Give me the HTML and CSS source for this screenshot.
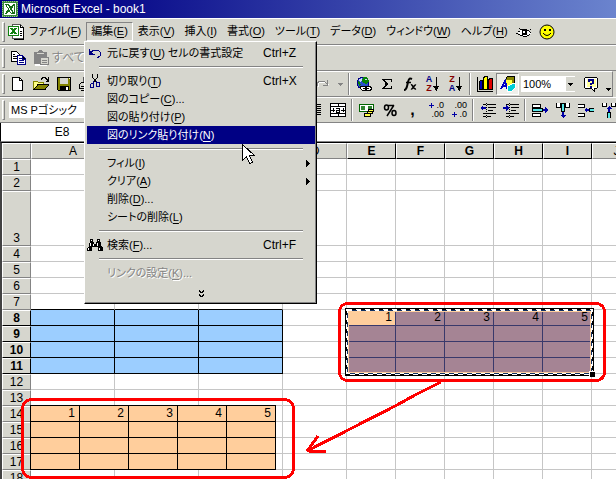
FILE: index.html
```html
<!DOCTYPE html>
<html lang="ja">
<head>
<meta charset="utf-8">
<title>Microsoft Excel - book1</title>
<link rel="stylesheet" href="styles.css">
</head>
<body>
<header class="titlebar">
  <svg class="icon" viewBox="0 0 16 16"><path fill="#3a8a3a" d="M0 0h16v16H0z"/><path fill="none" stroke="#8fc08f" stroke-dasharray="1 1" d="M0 .5h16M0 15.500h16M.5 0v16M15.500 0v16"/><path fill="#fff" d="M2 2h12v12H2z"/><path fill="#187018" d="M3 3h4l2 3 2-3h2l-3 5 3 5H9l-2-3-2 3H3l3-5z"/><path stroke="#fff" d="M5 4l5 8"/><path stroke="#187018" d="M12.500 3v10"/></svg>
  <h1>Microsoft Excel - book1</h1>
</header>

<nav class="menubar">
  <span class="grip"></span>
  <svg class="icon" viewBox="0 0 16 16"><path fill="#fff" stroke="#555" d="M4.500.5h8l3 3v11h-11z"/><path stroke="#000" fill="none" d="M12.500.5v3h3v12h-10M12 7.500h2m-2 2h2m-2 2h2"/><path fill="#fff" stroke="#108010" d="M.5 2.500h10v9H.5z"/><path stroke="#108010" stroke-width="2" d="M3 4l5 6M8 4l-5 6"/></svg>
  <button class="menu-title">ファイル(<u>F</u>)</button>
  <button class="menu-title open">編集(<u>E</u>)</button>
  <button class="menu-title">表示(<u>V</u>)</button>
  <button class="menu-title">挿入(<u>I</u>)</button>
  <button class="menu-title">書式(<u>O</u>)</button>
  <button class="menu-title">ツール(<u>T</u>)</button>
  <button class="menu-title">データ(<u>D</u>)</button>
  <button class="menu-title">ウィンドウ(<u>W</u>)</button>
  <button class="menu-title">ヘルプ(<u>H</u>)</button>
  <button class="tool" aria-label="表示"><svg class="icon" viewBox="0 0 16 16"><path fill="#fff" d="M4 6h9l2 3-3 3H5L2 9z"/><path fill="none" stroke="#000" d="M0 9.500h2M2 7.500h2M4 5.500h7M11 6.500h2M13 7.500h1M14 8.500h1M2 10.500h2M4 11.500h3M7 12.500h4M11 11.500h2M13 10.500h1M3 4.500h1M14 5.500h1"/><path d="M6 6h5v5H6z"/><path fill="#fff" d="M7 7h2v2H7z"/></svg></button>
  <button class="tool" aria-label="スマイル"><svg class="icon smooth" viewBox="0 0 16 16"><circle cx="8" cy="8" r="7" fill="#ff0" stroke="#000"/><path d="M5 5h2v2H5zM10 5h2v2h-2z"/><path fill="none" stroke="#000" d="M4 9q4 5 8 0"/></svg></button>
</nav>

<section class="toolbar">
  <span class="grip"></span>
  <button class="tool" aria-label="コピー"><svg class="icon" viewBox="0 0 16 16"><path fill="#fff" stroke="#000" d="M1.500 1.500h5l3 3v7h-8z"/><path stroke="#000" d="M3 4.500h2M3 6.500h4M3 8.500h4"/><path fill="#fff" stroke="#000084" d="M7.500 5.500h5l3 3v6h-8z"/><path stroke="#000084" d="M9 8.500h3M9 10.500h5M9 12.500h5M12.500 6v3h3"/></svg></button>
  <button class="tool" aria-label="貼り付け"><svg class="icon" viewBox="0 0 16 16"><path fill="#fff" d="M2 3h12v13H2z"/><path fill="#848484" d="M1 2h4l1-2h3l1 2h4v12H1z"/><path stroke="#d6d6ce" d="M4 3.500h7"/><path fill="#d6d6ce" stroke="#848484" d="M7.500 7.500h8v7h-8z"/><path stroke="#848484" d="M9 10.500h5M9 12.500h5"/></svg></button>
  <button class="text-tool" disabled>すべて貼り付け</button>
</section>

<section class="toolbar standard">
  <div class="tools start standard-start">
    <span class="grip"></span>
    <button class="tool" aria-label="新規作成"><svg class="icon" viewBox="0 0 16 16"><path fill="#fff" stroke="#000" d="M2.500 1.500h7l3 3v10h-10z"/><path fill="none" stroke="#000" d="M9.500 1.500v3h3"/></svg></button>
    <button class="tool" aria-label="開く"><svg class="icon" viewBox="0 0 16 16"><path fill="#ffff84" stroke="#848400" d="M.5 13.500v-8h4l1 1h5v7z"/><path fill="#848400" stroke="#000" d="M1 13.500l4-5h11l-4 5z"/><path fill="none" stroke="#000" d="M8 3.500l2-2h2l3 3M15.500 1v4h-3"/></svg></button>
    <button class="tool" aria-label="保存"><svg class="icon" viewBox="0 0 16 16"><path fill="#848400" stroke="#000" d="M1.500 1.500h13v13h-12l-1-1z"/><path fill="#d6d6ce" d="M4 2h8v6H4z"/><path d="M4 10h9v5H4z"/><path fill="#fff" d="M10 11h2v3h-2zM13 2h1v1h-1z"/></svg></button>
    <button class="tool" aria-label="印刷"><svg class="icon" viewBox="0 0 16 16"><path fill="#fff" stroke="#555" d="M4.500 7.500v-6h8v6"/><path fill="#d6d6ce" stroke="#000" d="M.5 12.500v-4l2-2h12v6z"/><path stroke="#000" d="M2 10.500h10M2 14.500h12"/></svg></button>
  </div>
  <div class="tools">
    <button class="tool" aria-label="やり直し" disabled><svg class="icon" viewBox="0 0 16 16"><path fill="none" stroke="#fff" d="M3 11V8l2-2h5l4 3"/><path fill="none" stroke="#848484" d="M2.500 10V7l2-2h4l4 3M12.500 4v5h-5"/></svg></button>
    <button class="drop" aria-label="やり直しの一覧" disabled><svg viewBox="0 0 7 4"><path fill="#848484" d="M0 0h7L3.500 4z"/></svg></button>
    <span class="sep"></span>
    <button class="tool" aria-label="ハイパーリンク"><svg class="icon" viewBox="0 0 16 16"><circle cx="7" cy="7" r="6" fill="#2850c8" stroke="#000084"/><path fill="#088408" d="M7 1h4l2 4-3 4-2-2-2-1zM2 5l2 1 1 3-2 1z"/><path fill="#c6d6ff" d="M3 3l3-1v2L4 6zM9 3h2v1H9z"/><path fill="#fff" stroke="#000" d="M4.500 10.500h6v4h-4l-2-2zM9.500 10.500h5l1 2-1 2h-5z"/><path stroke="#000" d="M7 12.500h6"/></svg></button>
    <button class="tool" aria-label="オート SUM"><svg class="icon" viewBox="0 0 16 16"><path fill="none" stroke="#000" d="M12.500 6V3.500h-9M3 12.500h9.500V10"/><path fill="none" stroke="#000" stroke-width="2" d="M4 3l4 5-4 5"/></svg></button>
    <button class="tool" aria-label="関数貼り付け"><svg class="icon smooth" viewBox="0 0 16 16"><path fill="none" stroke="#000" stroke-width="2" d="M2 14c3 0 3-4 4-8s2-4 4-3"/><path fill="none" stroke="#000" stroke-width="1.500" d="M4 6.500h5M9 9c2-1 2 5 5 4M14 9c-2-1-3 5-5 4"/></svg></button>
    <button class="tool sort" aria-label="昇順で並べ替え"><span class="letters"><b class="navy">A</b><b class="maroon">Z</b></span><svg viewBox="0 0 6 16"><path stroke="#000" d="M3.500 1v13"/><path d="M0 10h6l-2.500 5z"/></svg></button>
    <button class="tool sort" aria-label="降順で並べ替え"><span class="letters"><b class="maroon">Z</b><b class="navy">A</b></span><svg viewBox="0 0 6 16"><path stroke="#000" d="M3.500 1v13"/><path d="M0 10h6l-2.500 5z"/></svg></button>
    <span class="sep"></span>
    <button class="tool" aria-label="グラフ ウィザード"><svg class="icon" viewBox="0 0 16 16"><path stroke="#000" fill="none" d="M.5 1v14.500H16"/><path fill="#0000b5" stroke="#000" d="M2.500 5.500l1-1h2v9h-3z"/><path fill="#ff0" stroke="#000" d="M6.500 2.500l1-2h3v13h-4z"/><path fill="#e00000" stroke="#000" d="M11.500 4.500l1-2h3v11h-4z"/></svg></button>
    <button class="tool pressed" aria-label="図形描画" aria-pressed="true"><svg class="icon" viewBox="0 0 16 16"><path fill="#848400" stroke="#000" d="M5.500 3.500l2-3h7v7l-2 3h-7z"/><path fill="#ffff42" d="M6 4h6v6H6z"/><path fill="none" stroke="#0000c6" stroke-width="2" d="M1 13l4-8 2 8M2 10h5"/><path fill="#00ced6" stroke="#fff" d="M7.500 10.500l5-3h3v4l-4 4h-4z"/></svg></button>
    <select class="combo zoom" aria-label="ズーム"><option>100%</option></select>
    <button class="tool help" aria-label="ヘルプ"><svg class="icon" viewBox="0 0 16 16"><path fill="#fff" stroke="#000" d="M2.500 1.500h11l1 1v9l-1 1h-2v3l-3-3h-6l-1-1v-9z"/><path fill="#ffff9c" d="M4 3h9v8H4z"/><path fill="none" stroke="#000084" stroke-width="2" d="M6 6V4h4v3L8 8v1M8 10v2"/></svg></button>
    <button class="drop low" aria-label="その他のボタン"><svg viewBox="0 0 7 4"><path d="M0 0h7L3.500 4z"/></svg></button>
  </div>
</section>

<section class="toolbar">
  <div class="tools start format-start">
    <span class="grip"></span>
    <select class="combo font" aria-label="フォント"><option>MS Pゴシック</option></select>
  </div>
  <div class="tools">
    <button class="tool" aria-label="右揃え"><svg class="icon" viewBox="0 0 16 16"><path stroke="#000" d="M1 2.500h13M5 4.500h9M1 6.500h13M5 8.500h9M1 10.500h13M5 12.500h9"/></svg></button>
    <button class="tool" aria-label="セルを結合して中央揃え"><svg class="icon" viewBox="0 0 16 16"><path fill="#fff" stroke="#000" d="M.5 1.500h15v13H.5zM.5 4.500h15v7H.5M8.500 1v3M8.500 12v3"/><path stroke="#000" fill="none" d="M1 8h4M3 6v4M11 8h4M13 6v4M6 6.500h3.500V10H6.500V8.500h3"/></svg></button>
    <span class="sep"></span>
    <button class="tool" aria-label="通貨スタイル"><svg class="icon" viewBox="0 0 16 16"><path fill="#fff" stroke="#006300" d="M.5 2.500h14v7H.5z"/><path fill="#318431" d="M2 4h11v4H2z"/><path fill="#fff" d="M6 4h3v4H6z"/><path fill="#ffff42" stroke="#000" d="M9.500 7.500h5v2h-5zM8.500 9.500h5v2h-5zM5.500 11.500h6v3h-6z"/></svg></button>
    <button class="tool" aria-label="パーセント スタイル"><svg class="icon smooth" viewBox="0 0 16 16"><path fill="none" stroke="#000" stroke-width="1.500" d="M12 3L5 14M2.500 5.500a2 2.500 0 1 0 4 0a2 2.500 0 1 0-4 0M10 11a2 2.500 0 1 0 4 0a2 2.500 0 1 0-4 0M5 3.500h7"/></svg></button>
    <button class="tool glyph" aria-label="桁区切りスタイル">,</button>
    <button class="tool decimals" aria-label="小数点表示桁上げ"><span><svg viewBox="0 0 5 5"><path fill="#0000a5" d="M0 2h2V0h1v2h2v1H3v2H2V3H0z"/></svg>.0</span><span>.00</span></button>
    <button class="tool decimals" aria-label="小数点表示桁下げ"><span>.00</span><span><svg viewBox="0 0 5 5"><path fill="#0000a5" d="M0 2h2V0h1v2h2v1H3v2H2V3H0z"/></svg>.0</span></button>
    <span class="sep"></span>
    <button class="tool" aria-label="インデント解除"><svg class="icon" viewBox="0 0 16 16"><path stroke="#000" d="M3 2.500h3M7 2.500h9M8 5.500h8M8 8.500h5M3 11.500h3M7 11.500h9M3 14.500h3M7 14.500h4"/><path stroke="#000" stroke-dasharray="1 1" d="M6.500 1v15"/><path fill="#0000a5" d="M0 6l3-3v2h3v2H3v2z"/></svg></button>
    <button class="tool" aria-label="インデント"><svg class="icon" viewBox="0 0 16 16"><path stroke="#000" d="M3 2.500h3M7 2.500h9M8 5.500h8M8 8.500h5M3 11.500h3M7 11.500h9M3 14.500h3M7 14.500h4"/><path stroke="#000" stroke-dasharray="1 1" d="M6.500 1v15"/><path fill="#0000a5" d="M6 6L3 3v2H0v2h3v2z"/></svg></button>
    <span class="sep"></span>
    <button class="tool" aria-label="セルの挿入 右"><svg class="icon" viewBox="0 0 16 16"><path fill="#fff" stroke="#000" d="M.5 2.500h8v3h-8zM.5 11.500h8v3h-8z"/><path fill="#5ae7e7" stroke="#000" d="M.5 6.500h10v3H.5z"/><path fill="#0000a5" d="M11 7h2V5l3 3-3 3V9h-2z"/></svg></button>
    <button class="tool" aria-label="セルの挿入 下"><svg class="icon" viewBox="0 0 16 16"><path fill="#fff" stroke="#000" d="M1.500 1v4.500h4V1M10.500 1v4.500h4V1"/><path fill="#5ae7e7" stroke="#000" d="M6.500 1.500h3v8h-3z"/><path fill="#0000a5" d="M7 10h2v3h2l-3 3-3-3h2z"/></svg></button>
    <button class="tool" aria-label="セルの削除 左"><svg class="icon" viewBox="0 0 16 16"><path fill="#fff" stroke="#000" d="M0 2.500h6.500v3H0M0 11.500h6.500v3H0"/><path fill="#5ae7e7" stroke="#000" d="M16 6.500h-5v3h5"/><path fill="#0000a5" d="M11 7H9V5L6 8l3 3V9h2z"/></svg></button>
    <button class="tool" aria-label="セルの削除 上"><svg class="icon" viewBox="0 0 16 16"><path fill="#fff" stroke="#000" d="M1.500 1v3.500h4V1M10.500 1v3.500h4V1"/><path fill="#5ae7e7" stroke="#000" d="M6.500 15.500v-5h3v5"/><path fill="#0000a5" d="M7 10V7H5l3-3 3 3H9v3z"/></svg></button>
  </div>
</section>

<div class="formula-bar"><input class="name-box" aria-label="名前ボックス" value="E8"><input class="formula" aria-label="数式バー"></div>

<main class="sheet">
  <table class="grid">
    <colgroup><col class="c-head"><col class="c-wide"><col class="c-wide"><col class="c-wide"><col class="c-mid"><col class="c-slim"><col class="c-slim"><col class="c-slim"><col class="c-slim"><col class="c-slim"><col></colgroup>
    <thead><tr><th></th><th>A</th><th>B</th><th>C</th><th>D</th><th class="on">E</th><th class="on">F</th><th class="on">G</th><th class="on">H</th><th class="on">I</th><th>J</th></tr></thead>
    <tbody>
      <tr><th>1</th><td></td><td></td><td></td><td></td><td></td><td></td><td></td><td></td><td></td><td></td></tr>
      <tr><th>2</th><td></td><td></td><td></td><td></td><td></td><td></td><td></td><td></td><td></td><td></td></tr>
      <tr class="tall"><th>3</th><td></td><td></td><td></td><td></td><td></td><td></td><td></td><td></td><td></td><td></td></tr>
      <tr><th>4</th><td></td><td></td><td></td><td></td><td></td><td></td><td></td><td></td><td></td><td></td></tr>
      <tr><th>5</th><td></td><td></td><td></td><td></td><td></td><td></td><td></td><td></td><td></td><td></td></tr>
      <tr><th>6</th><td></td><td></td><td></td><td></td><td></td><td></td><td></td><td></td><td></td><td></td></tr>
      <tr class="edge"><th>7</th><td></td><td></td><td></td><td></td><td></td><td></td><td></td><td></td><td></td><td></td></tr>
      <tr><th class="on">8</th><td class="blue"></td><td class="blue"></td><td class="blue"></td><td></td><td class="sel active">1</td><td class="sel">2</td><td class="sel">3</td><td class="sel">4</td><td class="sel">5</td><td></td></tr>
      <tr><th class="on">9</th><td class="blue"></td><td class="blue"></td><td class="blue"></td><td></td><td class="sel"></td><td class="sel"></td><td class="sel"></td><td class="sel"></td><td class="sel"></td><td></td></tr>
      <tr><th class="on">10</th><td class="blue"></td><td class="blue"></td><td class="blue"></td><td></td><td class="sel"></td><td class="sel"></td><td class="sel"></td><td class="sel"></td><td class="sel"></td><td></td></tr>
      <tr><th class="on">11</th><td class="blue"></td><td class="blue"></td><td class="blue"></td><td></td><td class="sel"></td><td class="sel"></td><td class="sel"></td><td class="sel"></td><td class="sel"></td><td></td></tr>
      <tr><th>12</th><td></td><td></td><td></td><td></td><td></td><td></td><td></td><td></td><td></td><td></td></tr>
      <tr><th>13</th><td></td><td></td><td></td><td></td><td></td><td></td><td></td><td></td><td></td><td></td></tr>
      <tr><th>14</th><td></td><td></td><td></td><td></td><td></td><td></td><td></td><td></td><td></td><td></td></tr>
      <tr><th>15</th><td></td><td></td><td></td><td></td><td></td><td></td><td></td><td></td><td></td><td></td></tr>
      <tr><th>16</th><td></td><td></td><td></td><td></td><td></td><td></td><td></td><td></td><td></td><td></td></tr>
      <tr><th>17</th><td></td><td></td><td></td><td></td><td></td><td></td><td></td><td></td><td></td><td></td></tr>
      <tr><th>18</th><td></td><td></td><td></td><td></td><td></td><td></td><td></td><td></td><td></td><td></td></tr>
    </tbody>
  </table>

  <table class="linked-picture">
    <tr><td>1</td><td>2</td><td>3</td><td>4</td><td>5</td></tr>
    <tr><td></td><td></td><td></td><td></td><td></td></tr>
    <tr><td></td><td></td><td></td><td></td><td></td></tr>
    <tr><td></td><td></td><td></td><td></td><td></td></tr>
  </table>

  <svg class="marquee" viewBox="0 0 250 69">
    <path fill="none" stroke="#000" stroke-width="2" d="M1 1h247v66H1z"/>
    <path fill="none" stroke="#ffce9c" stroke-width="2" d="M3 3h243v62H3z"/>
    <path fill="none" stroke="#fff" d="M2.500 2.500h244v63h-244z"/>
    <path fill="none" stroke="#fff" d="M1.500 1.500h246v65h-246z" stroke-dasharray="5 4"/>
    <path fill="none" stroke="#103163" d="M2.500 2.500h244v63h-244z" stroke-dasharray="5 4" stroke-dashoffset="5"/>
    <path fill="#fff" d="M244 63h5v5h-5z"/><path d="M245 64h5v5h-5z"/>
  </svg>

  <svg class="annotation" viewBox="0 0 616 337">
    <rect x="339.500" y="161.500" width="265" height="77" rx="8"/>
    <rect x="22.500" y="257.500" width="271" height="78" rx="9"/>
    <path d="M441 240l-26 13-18 10-88 45M318 294l-10 14 1 1 17 1"/>
  </svg>
</main>

<div class="menu" role="menu">
  <button role="menuitem"><svg class="icon" viewBox="0 0 16 16"><path fill="none" stroke="#000084" d="M2.500 4v5h5M3 8l4-3h4l2 2v4l-3 2"/><path fill="#000084" d="M2 5l5 5H2z"/></svg><span>元に戻す(<u>U</u>) セルの書式設定</span><kbd>Ctrl+Z</kbd></button>
  <hr>
  <button role="menuitem"><svg class="icon" viewBox="0 0 16 16"><path fill="none" stroke="#000" d="M5.500 1v3l4 6M10.500 1v3l-4 6"/><path fill="none" stroke="#000084" d="M6.500 8v3M9.500 8v3M4.500 10.500h2v4h-3v-3zM9.500 9.500h3v4h-3z"/></svg><span>切り取り(<u>T</u>)</span><kbd>Ctrl+X</kbd></button>
  <button role="menuitem"><i></i><span>図のコピー(<u>C</u>)...</span></button>
  <button role="menuitem"><i></i><span>図の貼り付け(<u>P</u>)</span></button>
  <button role="menuitem" class="hot"><i></i><span>図のリンク貼り付け(<u>N</u>)</span></button>
  <hr>
  <button role="menuitem"><i></i><span>フィル(<u>I</u>)</span><svg class="more" viewBox="0 0 4 7"><path d="M0 0l4 3.500L0 7z"/></svg></button>
  <button role="menuitem"><i></i><span>クリア(<u>A</u>)</span><svg class="more" viewBox="0 0 4 7"><path d="M0 0l4 3.500L0 7z"/></svg></button>
  <button role="menuitem"><i></i><span>削除(<u>D</u>)...</span></button>
  <button role="menuitem"><i></i><span>シートの削除(<u>L</u>)</span></button>
  <hr>
  <button role="menuitem"><svg class="icon" viewBox="0 0 16 16"><path d="M3 2h3v3h1v2h2V5h1V2h3v3l1 1v3l2 2v3h-5v-4H5v4H0v-3l2-2V6l1-1z"/><path fill="#fff" d="M4 3h1v1H4zM11 3h1v1h-1zM3 6h1v3H3zM6 7h1v2H6zM10 6h1v3h-1zM1 11h1v2H1zM12 11h1v2h-1z"/></svg><span>検索(<u>F</u>)...</span><kbd>Ctrl+F</kbd></button>
  <hr>
  <button role="menuitem" disabled><i></i><span>リンクの設定(<u>K</u>)...</span></button>
  <button class="expand" aria-label="すべて表示"><svg viewBox="0 0 5 8"><path fill="none" stroke="#000" stroke-width="1.500" d="M0 .5l2.500 2L5 .5M0 4.500l2.500 2 2.500-2"/></svg></button>
</div>

<svg class="cursor" viewBox="0 0 13 21"><path fill="#fff" stroke="#000" d="M.5.5v16l4-4 3 7 3-1-3-7h5z"/></svg>
</body>
</html>
```
FILE: styles.css
```css
:root {
  --face: #d6d6ce;
  --shade: #848484;
  --navy: #000084;
  --line: #c6c6c6;
  --orange: #ffce9c;
}

* { box-sizing: border-box; }

body {
  position: relative;
  margin: 0;
  height: 100vh;
  overflow: hidden;
  background: var(--face);
  color: #000;
  font: 12px/16px "Liberation Sans", "Noto Sans CJK JP", sans-serif;
  font-feature-settings: "palt";
}

button, input, select {
  margin: 0;
  padding: 0;
  border: 0;
  border-radius: 0;
  background: none;
  color: inherit;
  font: inherit;
  font-feature-settings: inherit;
}

svg { display: block; flex: none; shape-rendering: crispEdges; }
.smooth { shape-rendering: auto; }
.icon { width: 16px; height: 16px; }
u { text-underline-offset: 2px; }

.titlebar {
  display: flex;
  align-items: center;
  gap: 3px;
  height: 18px;
  padding-left: 2px;
  background: linear-gradient(90deg, #000084 12%, #6b84ce);
  color: #fff;
}
.titlebar h1 { margin: 0; font-size: 12px; font-weight: 400; }

.menubar, .toolbar {
  display: flex;
  align-items: center;
  border-top: 1px solid #fff;
  border-bottom: 1px solid var(--shade);
  white-space: nowrap;
}
.menubar { height: 27px; padding-left: 2px; }
.toolbar { height: 26px; padding-left: 2px; }
.standard { margin-right: 3px; border-right: 1px solid var(--shade); }

.grip {
  flex: none;
  width: 3px;
  height: 20px;
  margin-right: 1px;
  border: 1px solid;
  border-color: #fff var(--shade) var(--shade) #fff;
}
.menubar .grip { margin-right: 3px; }

.menu-title {
  height: 19px;
  padding: 0 4px;
  border: 1px solid transparent;
  font-size: 11px;
  line-height: 17px;
}
.menu-title.open { border-color: var(--shade) #fff #fff var(--shade); }

.tools { display: flex; align-items: center; flex: none; }
.start { overflow: hidden; }
.standard-start { width: 309px; }
.format-start { width: 301px; }

.tool {
  display: flex;
  flex: none;
  align-items: center;
  justify-content: center;
  width: 23px;
  height: 22px;
}
.text-tool { width: 32px; overflow: hidden; text-align: left; color: var(--shade); text-shadow: 1px 1px #fff; }
.pressed {
  border: 1px solid;
  border-color: var(--shade) #fff #fff var(--shade);
  background: #efefea;
}
.glyph { font-weight: 700; font-size: 16px; }
.sep {
  width: 2px;
  height: 22px;
  margin: 0 2px;
  border-left: 1px solid var(--shade);
  border-right: 1px solid #fff;
}
.drop { display: flex; justify-content: center; width: 12px; }
.drop svg { width: 5px; height: 3px; }
.low { padding-top: 10px; }
.help { margin-left: 4px; }

.sort { gap: 1px; }
.sort svg { width: 6px; height: 16px; }
.letters { display: flex; flex-direction: column; font-size: 9px; line-height: 9px; }
.navy { color: var(--navy); }
.maroon { color: #840000; }

.decimals { flex-direction: column; align-items: flex-end; padding-right: 3px; font-size: 9px; line-height: 9px; }
.decimals span { display: flex; align-items: center; gap: 2px; }
.decimals svg { width: 5px; height: 5px; }

.combo { height: 16px; background-color: #fff; font-size: 11px; appearance: none; }
.font { width: 140px; margin-left: 3px; padding-left: 2px; }
.zoom {
  width: 54px;
  margin-left: 2px;
  padding-left: 2px;
  background-image: linear-gradient(#000, #000), linear-gradient(#000, #000), linear-gradient(#000, #000), linear-gradient(var(--face), var(--face));
  background-repeat: no-repeat;
  background-size: 5px 1px, 3px 1px, 1px 1px, 9px 14px;
  background-position: right 2px top 7px, right 3px top 8px, right 4px top 9px, right 0 top 1px;
}

.formula-bar {
  display: flex;
  height: 19px;
  border-left: 1px solid #000;
  border-bottom: 1px solid var(--shade);
  background: #fff;
}
.name-box { width: 122px; text-align: center; }
.formula { flex: 1; min-width: 0; }

.sheet { position: relative; border-left: 2px solid #424242; border-top: 1px solid #000; background: #fff; }

.grid { width: 100%; min-width: 639px; table-layout: fixed; border-spacing: 0; }
.c-head { width: 29px; }
.c-wide { width: 84px; }
.c-mid { width: 64px; }
.c-slim { width: 49px; }
.grid tr { height: 16px; }
.grid .tall { height: 55px; }
.grid th, .grid td { padding: 0; overflow: hidden; line-height: 15px; vertical-align: bottom; }
.grid th {
  border: 1px solid;
  border-color: #fff var(--shade) var(--shade) #fff;
  background: var(--face);
  font-weight: 400;
  line-height: 14px;
}
.grid th.on { border-right-color: #000; border-bottom-color: #000; font-weight: 700; }
.grid td {
  border-right: 1px solid var(--line);
  border-bottom: 1px solid var(--line);
  text-align: right;
  padding-right: 3px;
}
.grid .edge td:nth-child(-n+4) { border-bottom-color: #000; }
.grid td.blue { border-color: #000; background: #9cceff; }
.grid td.sel { border-color: #39396b; background: #a58494; }
.grid td.active { background: var(--orange); }

.linked-picture {
  position: absolute;
  left: 28px;
  top: 262px;
  border-spacing: 0;
  border-left: 1px solid #000;
  border-top: 1px solid #000;
}
.linked-picture td {
  width: 49px;
  height: 16px;
  padding: 0 4px 0 0;
  border-right: 1px solid #000;
  border-bottom: 1px solid #000;
  background: var(--orange);
  line-height: 15px;
  text-align: right;
}

.marquee { position: absolute; left: 343px; top: 165px; width: 250px; height: 69px; }
.annotation {
  position: absolute;
  left: -2px;
  top: -1px;
  width: 616px;
  height: 337px;
  fill: none;
  stroke: #f00;
  stroke-width: 3;
}

.menu {
  position: absolute;
  left: 84px;
  top: 41px;
  width: 233px;
  padding: 2px 1px 1px 2px;
  border: 1px solid;
  border-color: #fff #000 #000 #fff;
  background: var(--face);
  box-shadow: inset -1px -1px var(--shade);
  white-space: nowrap;
}
.menu button {
  display: grid;
  grid-template-columns: 20px 1fr 52px;
  align-items: center;
  width: 100%;
  height: 18px;
  text-align: left;
}
.menu span { font-size: 11px; }
.menu kbd { font: inherit; }
.menu hr {
  height: 2px;
  margin: 4px 12px;
  border: 0;
  border-top: 1px solid var(--shade);
  border-bottom: 1px solid #fff;
}
.menu .hot { background: var(--navy); color: #fff; }
.menu button:disabled { color: var(--shade); text-shadow: 1px 1px #fff; }
.menu .more { width: 4px; height: 7px; margin-right: 5px; justify-self: end; grid-column: 3; }
.menu .expand { display: flex; justify-content: center; height: 20px; padding-top: 4px; }
.expand svg { width: 5px; height: 8px; }

.cursor { position: absolute; left: 242px; top: 144px; width: 13px; height: 21px; }
```
